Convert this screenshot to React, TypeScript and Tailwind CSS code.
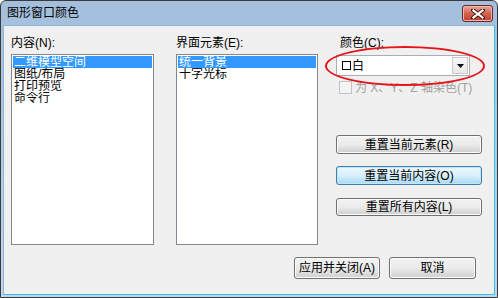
import React from 'react';

const font = { fontFamily: '"Liberation Sans", "Noto Sans CJK SC", sans-serif' };

const Btn = ({ label, focused = false, className = '' }: { label: string; focused?: boolean; className?: string }) => (
  <div
    className={`flex items-center justify-center rounded-[3px] border text-[12px] leading-[12px] text-black ${
      focused
        ? 'border-[#3c7fb1] bg-gradient-to-b from-[#eaf6fd] via-[#d9f0fc] to-[#a7d9f5] shadow-[inset_0_0_0_1px_#c4e5f6]'
        : 'border-[#707070] bg-gradient-to-b from-[#f2f2f2] via-[#ebebeb] to-[#cfcfcf] shadow-[inset_0_0_0_1px_#fcfcfc]'
    } ${className}`}
  >
    {label}
  </div>
);

const ListBox = ({ items, width }: { items: string[]; width: string }) => (
  <div className={`${width} h-[191px] border border-[#828790] bg-white p-[1px]`}>
    {items.map((item, i) => (
      <div
        key={item}
        className={`h-[12px] overflow-hidden px-[1px] text-[12px] leading-[12px] whitespace-nowrap ${
          i === 0 ? 'bg-[#3399ff] text-white' : 'text-black'
        }`}
      >
        {item}
      </div>
    ))}
  </div>
);

export default function App() {
  return (
    <div style={font} className="w-[498px] h-[298px] overflow-hidden bg-white">
      <div className="flex h-full w-full flex-col rounded-t-[6px] border border-[#3a3a3a] bg-gradient-to-b from-[#a3bfdc] to-[#c0d6ec]">
        {/* Title bar */}
        <div className="flex h-[24px] items-center justify-between pl-[6px] pr-[4px]">
          <span className="text-[12px] leading-[12px] text-black">图形窗口颜色</span>
          <div className="mt-[1px] flex h-[17px] w-[31px] items-center justify-center rounded-[3px] border border-[#6b2525] bg-gradient-to-b from-[#e9a99c] via-[#d0614e] to-[#c2402e] shadow-[inset_0_0_0_1px_#eeb8ad]">
            <svg width="14" height="10" viewBox="0 0 14 10">
              <path d="M2 1 L12 9 M12 1 L2 9" stroke="#3b1a16" strokeWidth="4" strokeLinecap="square" />
              <path d="M2.5 1.5 L11.5 8.5 M11.5 1.5 L2.5 8.5" stroke="#ffffff" strokeWidth="2.2" strokeLinecap="square" />
            </svg>
          </div>
        </div>

        {/* Client area */}
        <div className="mx-[2px] mb-[2px] flex flex-1 flex-col border border-[#8fb4dc] border-b-[#2ec4ea] border-r-[#2ec4ea] bg-[#f0f0f0] pl-[7px] pt-[11px]">
          <div className="flex">
            <div className="flex flex-col">
              <div className="text-[12px] leading-[12px] text-black">内容(N):</div>
              <div className="mt-[5px]">
                <ListBox width="w-[143px]" items={['二维模型空间', '图纸/布局', '打印预览', '命令行']} />
              </div>
            </div>

            <div className="ml-[22px] flex flex-col">
              <div className="text-[12px] leading-[12px] text-black">界面元素(E):</div>
              <div className="mt-[5px]">
                <ListBox width="w-[142px]" items={['统一背景', '十字光标']} />
              </div>
            </div>

            <div className="ml-[18px] flex w-[146px] flex-col">
              <div className="pl-[4px] text-[12px] leading-[12px] text-black">颜色(C):</div>
              <div className="relative mt-[6px]">
                <div className="flex h-[21px] w-[134px] items-center border border-[#abadb3] bg-white pl-[5px] pr-[1px]">
                  <span className="mr-[1px] h-[9px] w-[9px] border border-black bg-white" />
                  <span className="text-[12px] leading-[12px] text-black">白</span>
                  <div className="ml-auto flex h-[17px] w-[16px] items-center justify-center border border-[#c8c8c8] bg-gradient-to-b from-[#f7f7f7] to-[#e8e8e8]">
                    <svg width="7" height="4" viewBox="0 0 7 4">
                      <path d="M0 0 H7 L3.5 4 Z" fill="#000" />
                    </svg>
                  </div>
                </div>
                {/* red annotation ellipse */}
                <div className="absolute left-[-11px] top-[-9px] h-[40px] w-[160px] rounded-[50%] border-2 border-[#e8141b]" />
              </div>
              <div className="mt-[5px] flex items-center">
                <span className="ml-[3px] h-[13px] w-[13px] border border-[#c2c2c2] bg-[#f4f4f4]" />
                <span className="ml-[3px] whitespace-nowrap text-[12px] leading-[12px] text-[#a0a0a0]">为 X、Y、Z 轴染色(T)</span>
              </div>

              <Btn className="mt-[41px] h-[19px] w-[146px]" label="重置当前元素(R)" />
              <Btn className="mt-[12px] h-[19px] w-[146px]" label="重置当前内容(O)" focused />
              <Btn className="mt-[13px] h-[18px] w-[146px]" label="重置所有内容(L)" />
            </div>
          </div>

          <div className="mt-[12px] flex justify-end gap-[9px] pr-[18px]">
            <Btn className="h-[22px] w-[86px]" label="应用并关闭(A)" />
            <Btn className="h-[22px] w-[87px]" label="取消" />
          </div>
        </div>
      </div>
    </div>
  );
}
